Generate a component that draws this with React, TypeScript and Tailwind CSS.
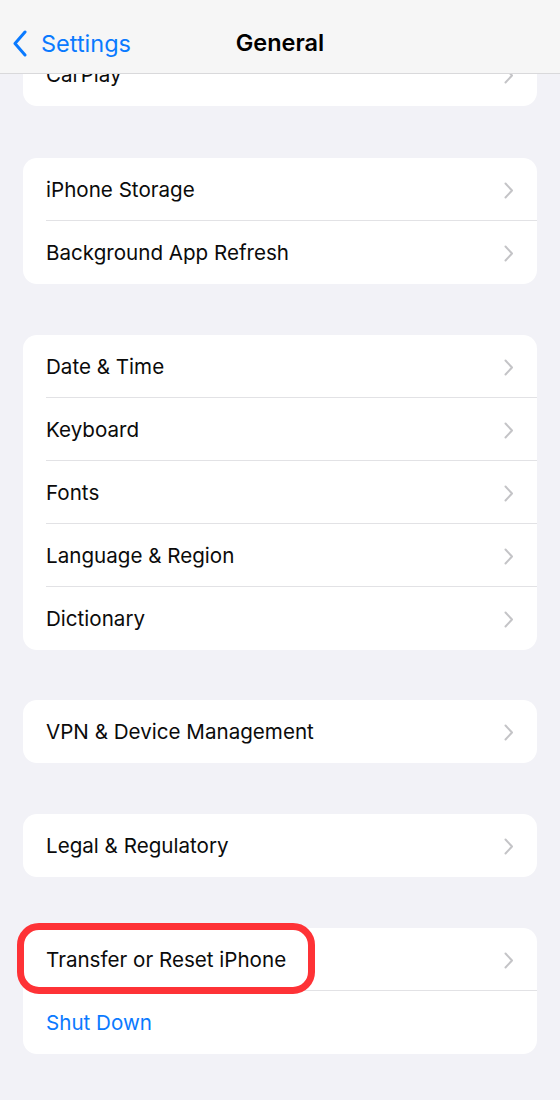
import React from "react";

const Chevron = () => (
  <svg width="10" height="17" viewBox="0 0 10 17" fill="none" className="shrink-0">
    <path d="M1.5 1.5L8 8.5L1.5 15.5" stroke="#c4c4c7" strokeWidth="2" strokeLinecap="round" strokeLinejoin="round" />
  </svg>
);

type Row = { label: string; blue?: boolean; highlight?: boolean; chevron?: boolean };

const Card = ({ rows }: { rows: Row[] }) => (
  <div className="mx-[23px] bg-white rounded-[14px]">
    {rows.map((r, i) => (
      <div key={r.label} className="relative h-[63px] pl-[23px]">
        <div className={`h-full flex items-center pr-[23px] pt-[2px] ${i < rows.length - 1 ? "border-b border-[#e2e2e5]" : ""}`}>
          <span className={`flex-1 text-[20.6px] ${r.blue ? "text-[#0a7aff]" : "text-[#0b0b0b]"}`}>{r.label}</span>
          {r.chevron !== false && <Chevron />}
        </div>
        {r.highlight && (
          <div className="absolute left-[-6px] top-[-5px] w-[298px] h-[71px] border-[7px] border-[#fe3236] rounded-[22px] pointer-events-none" />
        )}
      </div>
    ))}
  </div>
);

export default function App() {
  return (
    <div className="relative w-[560px] h-[1100px] bg-[#f2f2f7] overflow-hidden" style={{ fontFamily: "Inter, 'Liberation Sans', sans-serif" }}>
      <div className="pt-[43px] flex flex-col">
        <Card rows={[{ label: "CarPlay" }]} />
        <div className="h-[52px]" />
        <Card rows={[{ label: "iPhone Storage" }, { label: "Background App Refresh" }]} />
        <div className="h-[51px]" />
        <Card
          rows={[
            { label: "Date & Time" },
            { label: "Keyboard" },
            { label: "Fonts" },
            { label: "Language & Region" },
            { label: "Dictionary" },
          ]}
        />
        <div className="h-[50px]" />
        <Card rows={[{ label: "VPN & Device Management" }]} />
        <div className="h-[51px]" />
        <Card rows={[{ label: "Legal & Regulatory" }]} />
        <div className="h-[51px]" />
        <Card rows={[{ label: "Transfer or Reset iPhone", highlight: true }, { label: "Shut Down", blue: true, chevron: false }]} />
      </div>

      <div className="absolute left-0 top-0 w-full h-[74px] bg-[#f6f6f6] border-b border-[#d9d9db] flex items-center">
        <div className="absolute left-[12px] top-[30px] flex items-center">
          <svg width="16" height="27" viewBox="0 0 16 27" fill="none">
            <path d="M13 2L3 13.5L13 25" stroke="#0a7aff" strokeWidth="3" strokeLinecap="round" strokeLinejoin="round" />
          </svg>
          <span className="ml-[13px] text-[23.5px] text-[#0a7aff] leading-none">Settings</span>
        </div>
        <div className="w-full text-center text-[23.5px] font-semibold text-black leading-none pt-[13px]">General</div>
      </div>
    </div>
  );
}
